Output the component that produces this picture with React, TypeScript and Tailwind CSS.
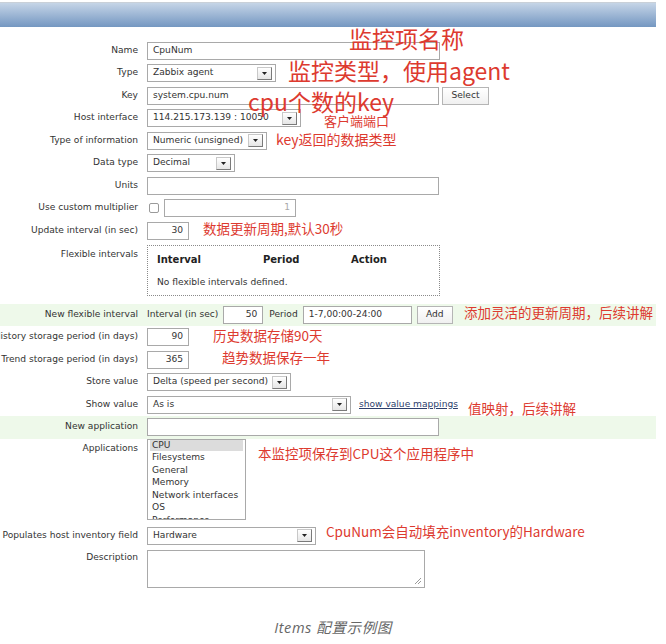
import type { ReactNode } from 'react';

const Arrow = () => (
  <span className="flex h-[13px] w-[15px] items-center justify-center border border-[#c8c8c8] border-b-[#7a7a7a] border-r-[#7a7a7a] bg-gradient-to-b from-white to-[#e6e6e6]">
    <svg width="5" height="3" viewBox="0 0 5 3">
      <path d="M0 0h5L2.5 3z" fill="#222" />
    </svg>
  </span>
);

const Select = ({ value, className }: { value: string; className: string }) => (
  <div className={`flex h-[18px] items-center justify-between border border-[#a9a9a9] bg-white pl-[5px] pr-[3px] ${className}`}>
    <span className="whitespace-nowrap">{value}</span>
    <Arrow />
  </div>
);

const Input = ({ value = '', className, right }: { value?: string; className: string; right?: boolean }) => (
  <div className={`flex h-[18px] items-center border border-[#a9a9a9] bg-white px-[5px] ${right ? 'justify-end' : ''} ${className}`}>
    <span className="whitespace-nowrap">{value}</span>
  </div>
);

const Button = ({ label, className }: { label: string; className: string }) => (
  <div className={`flex h-[18px] items-center justify-center border border-[#b5b5b5] bg-gradient-to-b from-white to-[#f0f0f0] ${className}`}>
    {label}
  </div>
);

const Row = ({
  label,
  children,
  className = '',
  top,
}: {
  label: string;
  children: ReactNode;
  className?: string;
  top?: string;
}) => (
  <div className={`flex ${top ? 'items-start' : 'h-[22.5px] items-center'} ${className}`}>
    <div className={`flex w-[138px] shrink-0 justify-end ${top ?? ''}`}>
      <span className="whitespace-nowrap">{label}</span>
    </div>
    <div className="ml-[9px] flex items-center">{children}</div>
  </div>
);

// red callouts drawn over the screenshot
const notes = [
  { text: '监控项名称', cls: 'left-[349px] top-[27px] text-[23px]' },
  { text: '监控类型，使用agent', cls: 'left-[288px] top-[59px] text-[23px]' },
  { text: 'cpu个数的key', cls: 'left-[248px] top-[90px] text-[23px]' },
  { text: '客户端端口', cls: 'left-[324px] top-[114px] text-[13px]' },
  { text: 'key返回的数据类型', cls: 'left-[276px] top-[132px] text-[14px]' },
  { text: '数据更新周期,默认30秒', cls: 'left-[203px] top-[222px] text-[13.5px]' },
  { text: '添加灵活的更新周期，后续讲解', cls: 'left-[464px] top-[306px] text-[13.5px]' },
  { text: '历史数据存储90天', cls: 'left-[213px] top-[329px] text-[13.5px]' },
  { text: '趋势数据保存一年', cls: 'left-[222px] top-[351px] text-[13.5px]' },
  { text: '值映射，后续讲解', cls: 'left-[468px] top-[402px] text-[13.5px]' },
  { text: '本监控项保存到CPU这个应用程序中', cls: 'left-[258px] top-[447px] text-[13.5px]' },
  { text: 'CpuNum会自动填充inventory的Hardware', cls: 'left-[326px] top-[525px] text-[13.5px]' },
];

const apps = ['CPU', 'Filesystems', 'General', 'Memory', 'Network interfaces', 'OS', 'Performance'];

export default function App() {
  return (
    <div className="relative h-[644px] w-[666px] overflow-hidden bg-white font-['DejaVu_Sans',sans-serif] text-[9.1px] text-[#333]">
      <div className="w-[656px]">
        <div className="mt-[2px] h-[25px] border-t border-[#c9d0d8] bg-gradient-to-b from-[#c6d5e7] to-[#7497c1]" />

        <div className="flex flex-col pt-[12.5px]">
          <Row label="Name">
            <Input value="CpuNum" className="w-[293px]" />
          </Row>
          <Row label="Type">
            <Select value="Zabbix agent" className="w-[129px]" />
          </Row>
          <Row label="Key">
            <Input value="system.cpu.num" className="w-[292px]" />
            <Button label="Select" className="ml-[3px] w-[47px]" />
          </Row>
          <Row label="Host interface">
            <Select value="114.215.173.139 : 10050" className="w-[154px]" />
          </Row>
          <Row label="Type of information">
            <Select value="Numeric (unsigned)" className="w-[120px]" />
          </Row>
          <Row label="Data type">
            <Select value="Decimal" className="w-[88px]" />
          </Row>
          <Row label="Units">
            <Input className="w-[292px]" />
          </Row>
          <Row label="Use custom multiplier">
            <span className="ml-[2px] h-[10px] w-[10px] rounded-[2px] border border-[#9a9a9a] bg-white" />
            <Input value="1" right className="ml-[5px] w-[132px] text-[#aaa]" />
          </Row>
          <Row label="Update interval (in sec)">
            <Input value="30" right className="w-[42px]" />
          </Row>
          <Row label="Flexible intervals" top="pt-[6px]" className="h-[61.5px]">
            <div className="mt-[3px] h-[51px] w-[293px] border border-dotted border-[#8a8a8a] px-[9px] pt-[6px]">
              <div className="flex text-[10px] font-bold text-[#222]">
                <span className="w-[106px]">Interval</span>
                <span className="w-[88px]">Period</span>
                <span>Action</span>
              </div>
              <div className="mt-[9px]">No flexible intervals defined.</div>
            </div>
          </Row>
          <Row label="New flexible interval" className="bg-[#eef9ea]">
            <span className="whitespace-nowrap">Interval (in sec)</span>
            <Input value="50" right className="ml-[5px] w-[40px]" />
            <span className="ml-[6px]">Period</span>
            <Input value="1-7,00:00-24:00" className="ml-[5px] w-[109px]" />
            <Button label="Add" className="ml-[5px] w-[36px]" />
          </Row>
          <Row label="History storage period (in days)">
            <Input value="90" right className="w-[42px]" />
          </Row>
          <Row label="Trend storage period (in days)">
            <Input value="365" right className="w-[42px]" />
          </Row>
          <Row label="Store value">
            <Select value="Delta (speed per second)" className="w-[144px]" />
          </Row>
          <Row label="Show value">
            <Select value="As is" className="w-[204px]" />
            <span className="ml-[8px] text-[#2c3e6b] underline">show value mappings</span>
          </Row>
          <Row label="New application" className="bg-[#eef9ea]">
            <Input className="w-[292px]" />
          </Row>
          <Row label="Applications" top="pt-[3px]" className="h-[86px]">
            <div className="h-[81px] w-[99px] overflow-hidden border border-[#a9a9a9] bg-white pl-[4px] pr-[2px] leading-[12.5px]">
              <div className="-mt-[1px]">
                {apps.map((a, i) => (
                  <div key={a} className={`-ml-[2px] pl-[2px] whitespace-nowrap ${i === 0 ? 'bg-[#dcdcdc]' : ''}`}>
                    {a}
                  </div>
                ))}
              </div>
            </div>
          </Row>
          <Row label="Populates host inventory field">
            <Select value="Hardware" className="w-[169px]" />
          </Row>
          <Row label="Description" top="pt-[4px]">
            <div className="relative mt-[3px] h-[38px] w-[278px] border border-[#a9a9a9] bg-white">
              <svg className="absolute bottom-[2px] right-[2px]" width="8" height="8" viewBox="0 0 8 8">
                <path d="M7 1L1 7M7 4L4 7" stroke="#999" strokeWidth="1" />
              </svg>
            </div>
          </Row>
        </div>
      </div>

      <p className="mt-[29px] text-center font-['Open_Sans','Noto_Sans_CJK_SC',sans-serif] text-[14.5px] italic tracking-[0.6px] text-[#666]">
        Items 配置示例图
      </p>

      {notes.map((n) => (
        <span
          key={n.text}
          className={`absolute whitespace-nowrap font-['Noto_Sans_CJK_SC',sans-serif] leading-none text-[#dd3a2f] ${n.cls}`}
        >
          {n.text}
        </span>
      ))}
    </div>
  );
}
